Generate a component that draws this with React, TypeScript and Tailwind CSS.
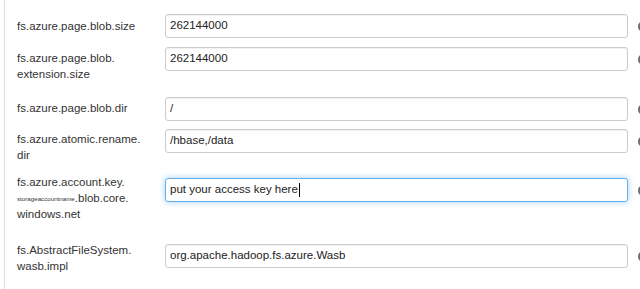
import React from "react";

const font = { fontFamily: '"Liberation Sans", Arial, Helvetica, sans-serif' };

function Field({
  value,
  focused,
}: {
  value: React.ReactNode;
  focused?: boolean;
}) {
  return (
    <div
      className={
        "w-[463px] h-[24px] shrink-0 flex items-center pl-[4px] rounded-[3px] border bg-white text-[11.5px] text-[#222] whitespace-nowrap overflow-hidden " +
        (focused
          ? "border-[#66afe9] shadow-[0_0_6px_rgba(102,175,233,0.6)]"
          : "border-[#cccccc] shadow-[inset_0_1px_1px_rgba(0,0,0,0.06)]")
      }
    >
      {value}
    </div>
  );
}

function Icon() {
  return (
    <div className="ml-[10px] shrink-0 h-[24px] flex items-center">
      <div className="w-[11px] h-[11px] rounded-full bg-[#6f6f6f]" />
    </div>
  );
}

export default function App() {
  return (
    <div
      className="w-[640px] h-[289px] overflow-hidden bg-white relative"
      style={font}
    >
      <div className="ml-[4px] h-[289px] border-l border-[#dddddd] pl-[12px] pt-[14px] text-[#333] w-[700px]">
        {/* Row 1 */}
        <div className="flex items-start">
          <div className="w-[148px] shrink-0 pt-[3.5px] text-[11.5px] leading-[16px]">
            fs.azure.page.blob.size
          </div>
          <Field value="262144000" />
          <Icon />
        </div>
        {/* Row 2 */}
        <div className="flex items-start mt-[9px]">
          <div className="w-[148px] shrink-0 pt-[3px] text-[11.5px] leading-[16px]">
            fs.azure.page.blob.
            <br />
            extension.size
          </div>
          <Field value="262144000" />
          <Icon />
        </div>
        {/* Row 3 */}
        <div className="flex items-start mt-[15px]">
          <div className="w-[148px] shrink-0 pt-[3px] text-[11.5px] leading-[16px]">
            fs.azure.page.blob.dir
          </div>
          <Field value="/" />
          <Icon />
        </div>
        {/* Row 4 */}
        <div className="flex items-start mt-[8px]">
          <div className="w-[148px] shrink-0 pt-[2px] text-[11.5px] leading-[16px]">
            fs.azure.atomic.rename.
            <br />
            dir
          </div>
          <Field value="/hbase,/data" />
          <Icon />
        </div>
        {/* Row 5 */}
        <div className="flex items-start mt-[11px]">
          <div className="w-[148px] shrink-0 text-[11.5px] leading-[16px]">
            fs.azure.account.key.
            <br />
            <span className="text-[6.2px] leading-none align-middle">storageaccountname</span>
            .blob.core.
            <br />
            windows.net
          </div>
          <div className="mt-[4px] flex">
            <Field
              focused
              value={
                <>
                  <span>put your access key here</span>
                  <span className="inline-block w-px h-[14px] bg-black ml-[1px]" />
                </>
              }
            />
            <Icon />
          </div>
        </div>
        {/* Row 6 */}
        <div className="flex items-start mt-[20px]">
          <div className="w-[148px] shrink-0 text-[11.5px] leading-[16px]">
            fs.AbstractFileSystem.
            <br />
            wasb.impl
          </div>
          <div className="mt-[2px] flex">
            <Field value="org.apache.hadoop.fs.azure.Wasb" />
            <Icon />
          </div>
        </div>
      </div>
    </div>
  );
}
